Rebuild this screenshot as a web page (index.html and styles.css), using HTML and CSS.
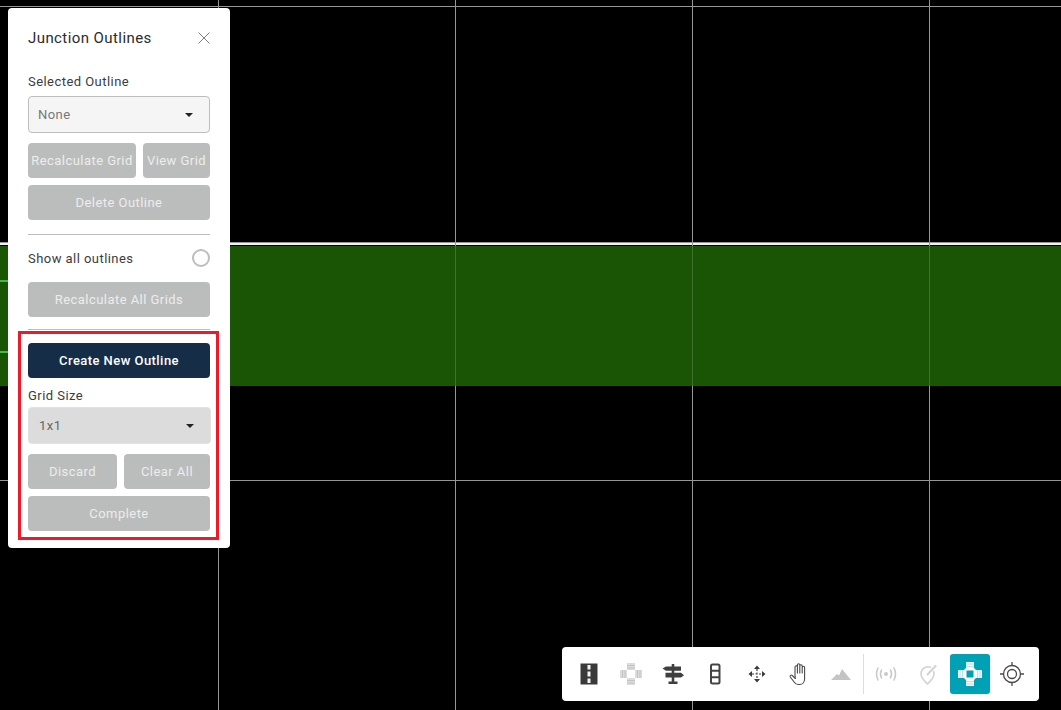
FILE: index.html
```html
<!DOCTYPE html>
<html lang="en">
<head>
    <meta charset="UTF-8">
    <title>Junction Outlines</title>
    <link rel="stylesheet" href="styles.css">
</head>
<body>
    <div class="map">
        <svg class="map-canvas" width="1061" height="710" viewBox="0 0 1061 710">
            <rect x="0" y="246" width="1061" height="140" fill="#1a5505"/>
            <rect x="0" y="243" width="1061" height="2" fill="#f2f2f2"/>
            <rect x="0" y="280" width="8" height="2" fill="#46b846"/>
            <rect x="0" y="351" width="8" height="2" fill="#46b846"/>
            <g fill="#969696">
                <rect x="0" y="6" width="1061" height="1"/>
                <rect x="0" y="242" width="1061" height="1"/>
                <rect x="0" y="480" width="1061" height="1"/>
                <rect x="218" y="0" width="1" height="710"/>
                <rect x="455" y="0" width="1" height="710"/>
                <rect x="692" y="0" width="1" height="710"/>
                <rect x="929" y="0" width="1" height="710"/>
            </g>
            <g fill="#3f7430">
                <rect x="455" y="246" width="1" height="140"/>
                <rect x="692" y="246" width="1" height="140"/>
                <rect x="929" y="246" width="1" height="140"/>
            </g>
        </svg>

        <div class="panel">
            <div class="panel-header">
                <h2>Junction Outlines</h2>
                <svg class="close" width="14" height="14" viewBox="0 0 14 14"><path d="M1.500 1.500l11 11M12.500 1.500l-11 11" stroke="#808080" stroke-width="1" fill="none"/></svg>
            </div>
            <div class="label label-first">Selected Outline</div>
            <div class="select"><span>None</span><i class="caret"></i></div>
            <div class="btn-row row-first">
                <button class="btn btn-recalc">Recalculate Grid</button>
                <button class="btn btn-view">View Grid</button>
            </div>
            <button class="btn btn-wide row-next">Delete Outline</button>
            <hr class="rule rule-a">
            <div class="toggle-row">
                <span>Show all outlines</span>
                <i class="radio"></i>
            </div>
            <button class="btn btn-wide row-all">Recalculate All Grids</button>
            <hr class="rule rule-b">
            <button class="btn btn-wide btn-primary">Create New Outline</button>
            <div class="label label-grid">Grid Size</div>
            <div class="select select-grey"><span>1x1</span><i class="caret"></i></div>
            <div class="btn-row row-discard">
                <button class="btn btn-discard">Discard</button>
                <button class="btn btn-clear">Clear All</button>
            </div>
            <button class="btn btn-wide row-next">Complete</button>
            <div class="highlight"></div>
        </div>

        <div class="toolbar">
            <div class="tool">
                <svg width="24" height="24" viewBox="0 0 24 24"><path fill="#3a3a3a" d="M3.500 1.500h17v21h-17z"/><path fill="#f4f4f4" d="M10.500 3h3v4.500h-3zM10.500 9.500h3v5h-3zM10.500 16.500h3V21h-3z"/></svg>
            </div>
            <div class="tool">
                <svg width="24" height="24" viewBox="0 0 24 24"><path fill="#dcdcdc" d="M8 1h8v7H8zM8 16h8v7H8zM1 8h7v8H1zM16 8h7v8h-7z"/><path stroke="#c2c2c2" stroke-width="1" d="M8 3.500h8M8 6h8M8 18.500h8M8 21h8M3.500 8v8M6 8v8M18.500 8v8M21 8v8"/></svg>
            </div>
            <div class="tool">
                <svg width="24" height="24" viewBox="0 0 24 24"><path fill="#3f3f3f" d="M10.700 2h2.600v2.500H20v4.300h-6.700v2H20l3 2.400-3 2.400h-6.700v4h3.200V22h-9v-2.400h3.200v-4H4.500v-4.800h6.200v-2H5L1.500 6.500 5 4.500h5.700z"/></svg>
            </div>
            <div class="tool">
                <svg width="24" height="24" viewBox="0 0 24 24"><rect x="8" y="2.500" width="8.500" height="19" rx="1.500" fill="none" stroke="#444" stroke-width="2"/><path stroke="#444" stroke-width="2" d="M8 8.800h8.500M8 15.200h8.500"/></svg>
            </div>
            <div class="tool">
                <svg width="24" height="24" viewBox="0 0 24 24"><path fill="#3a3a3a" d="M12 3.500l3 3.500H9zM12 20.500L9 17h6zM3.500 12L7 9v6zM20.500 12L17 15V9z"/><path fill="none" stroke="#3a3a3a" stroke-width="1.200" stroke-dasharray="2 1.500" d="M12 7v10M7 12h10"/></svg>
            </div>
            <div class="tool">
                <svg width="24" height="24" viewBox="0 0 24 24"><path fill="none" stroke="#4a4a4a" stroke-width="1.100" stroke-linejoin="round" d="M8 13V5a1.200 1.200 0 0 1 2.400 0v6V3a1.200 1.200 0 0 1 2.400 0v8V4a1.200 1.200 0 0 1 2.400 0v7V5.500a1.200 1.200 0 0 1 2.400 0V17c0 3-2 5.500-5 5.500h-1.500c-2 0-3-1-4-2.500l-3.800-5c-.8-1.300.8-2.600 2-1.500l3 3z"/></svg>
            </div>
            <div class="tool">
                <svg width="24" height="24" viewBox="0 0 24 24"><path fill="#c4c4c4" d="M2 18l6-6 2 1.500L13 7l9 11z"/></svg>
            </div>
            <div class="toolbar-divider"></div>
            <div class="tool">
                <svg width="24" height="24" viewBox="0 0 24 24"><circle cx="12" cy="12" r="2" fill="#c9c9c9"/><path fill="none" stroke="#c9c9c9" stroke-width="1.600" stroke-linecap="round" d="M7.500 8q-2 4 0 8M16.500 8q2 4 0 8M4 6q-3 6 0 12M20 6q3 6 0 12"/></svg>
            </div>
            <div class="tool">
                <svg width="24" height="24" viewBox="0 0 24 24"><path fill="none" stroke="#d4d4d4" stroke-width="1.700" stroke-linejoin="round" d="M15 5.500a7 7 0 0 0-10 6.500c0 4 3.500 7 6.500 10 3-3 6.500-6 6.500-10 0-1-.2-2-.6-2.800"/><path fill="none" stroke="#d4d4d4" stroke-width="2.200" d="M11 13l9-9.500"/></svg>
            </div>
            <div class="tool tool-active">
                <svg width="24" height="24" viewBox="0 0 24 24"><path fill="#fff" d="M8 0h8v6l2 2h6v8h-6l-2 2v6H8v-6l-2-2H0V8h6l2-2z"/><rect x="8.500" y="8.500" width="7" height="7" fill="#00a0b5"/><path stroke="#8fd3dc" stroke-width=".8" d="M8 2h8M8 4.300h8M8 19.700h8M8 22h8M2 8v8M4.300 8v8M19.700 8v8M22 8v8"/></svg>
            </div>
            <div class="tool">
                <svg width="26" height="26" viewBox="0 0 26 26"><circle cx="13" cy="13" r="8.500" fill="none" stroke="#4a4a4a" stroke-width="1.300"/><circle cx="13" cy="13" r="4.500" fill="none" stroke="#4a4a4a" stroke-width="1.300"/><path stroke="#4a4a4a" stroke-width="1.300" d="M13 1v4M13 21v4M1 13h4M21 13h4"/></svg>
            </div>
        </div>
    </div>
</body>
</html>
```

FILE: styles.css
```css
* {
    box-sizing: border-box;
}
body {
    margin: 0;
    background: #000;
    font-family: Roboto, "Liberation Sans", sans-serif;
    overflow: hidden;
}
.map {
    position: relative;
    width: 1061px;
    height: 710px;
    overflow: hidden;
}
.map-canvas {
    display: block;
}
.panel {
    position: absolute;
    left: 8px;
    top: 8px;
    width: 222px;
    height: 540px;
    padding: 20px 20px 0;
    background: #fff;
    border-radius: 4px;
    color: #333;
}
.panel-header {
    display: flex;
    align-items: center;
    justify-content: space-between;
    height: 20px;
}
.panel-header h2 {
    margin: 0;
    font-size: 15px;
    font-weight: 400;
    letter-spacing: 0.42px;
    color: #2b2b2b;
}
.close {
    margin-right: -1px;
}
.label {
    height: 16px;
    font-size: 13px;
    line-height: 16px;
    letter-spacing: 0.45px;
    color: #3c3c3c;
}
.label-first {
    margin-top: 26px;
}
.label-grid {
    margin-top: 10px;
}
.select {
    display: flex;
    align-items: center;
    justify-content: space-between;
    height: 37px;
    padding: 0 16px 0 9px;
    background: #f5f5f5;
    border: 1px solid #bdbdbd;
    border-radius: 4px;
    font-size: 13px;
    letter-spacing: 0.45px;
    color: #777;
    margin-top: 6px;
}
.select-grey {
    width: 183px;
    margin-top: 3px;
    background: #dcdcdc;
    border-color: #e2e2e2;
    padding-left: 10px;
    color: #666;
}
.caret {
    width: 0;
    height: 0;
    border-left: 4px solid transparent;
    border-right: 4px solid transparent;
    border-top: 4px solid #222;
}
.btn-row {
    display: flex;
    justify-content: space-between;
}
.row-first {
    margin-top: 10px;
}
.row-discard {
    margin-top: 10px;
}
.btn {
    display: block;
    height: 35px;
    padding: 0;
    background: #bbbdbd;
    border: none;
    border-radius: 4px;
    font-family: inherit;
    font-size: 13px;
    letter-spacing: 0.45px;
    color: #ecedec;
}
.btn-wide {
    width: 100%;
}
.btn-recalc {
    width: 108px;
}
.btn-view {
    width: 67px;
}
.btn-discard {
    width: 89px;
}
.btn-clear {
    width: 86px;
}
.row-next {
    margin-top: 7px;
}
.row-all {
    margin-top: 12px;
}
.btn-primary {
    margin-top: 13px;
    background: #162d47;
    color: #fff;
    font-weight: 500;
}
.rule {
    height: 1px;
    margin: 0;
    border: none;
    background: #bdbdbd;
}
.rule-a {
    margin-top: 14px;
}
.rule-b {
    margin-top: 12px;
}
.toggle-row {
    display: flex;
    align-items: center;
    justify-content: space-between;
    height: 24px;
    margin-top: 11px;
    font-size: 13px;
    letter-spacing: 0.45px;
    color: #3c3c3c;
}
.radio {
    width: 18px;
    height: 18px;
    border: 2px solid #bdbdbd;
    border-radius: 50%;
}
.highlight {
    position: absolute;
    left: 10px;
    top: 323px;
    width: 201px;
    height: 209px;
    border: 3px solid #ea1c2c;
}
.toolbar {
    position: absolute;
    left: 562px;
    top: 647px;
    width: 477px;
    height: 54px;
    padding: 7px;
    display: flex;
    gap: 2px;
    background: #fff;
    border-radius: 4px;
}
.tool {
    display: flex;
    align-items: center;
    justify-content: center;
    width: 40px;
    height: 40px;
    border-radius: 3px;
}
.tool-active {
    background: #00a0b5;
}
.toolbar-divider {
    width: 1px;
    height: 40px;
    background: #dcdcdc;
}
```
